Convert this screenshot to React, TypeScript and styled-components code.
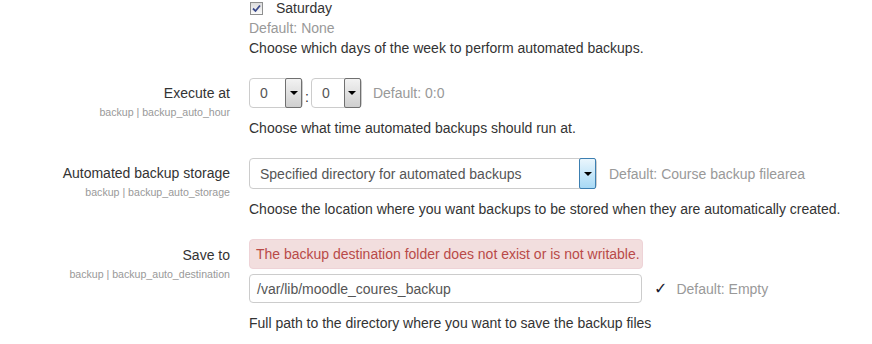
import React from 'react'
import styled, { createGlobalStyle } from 'styled-components'

const GlobalStyle = createGlobalStyle`
  body {
    margin: 0;
    background: #fff;
    font-family: "Liberation Sans", Arial, sans-serif;
    font-size: 14px;
    color: #333;
  }
`

const Page = styled.div`
  width: 872px;
  height: 344px;
  overflow: hidden;
`

const Setting = styled.div`
  display: grid;
  grid-template-columns: 230px 1fr;
  column-gap: 19px;
  margin-bottom: 20px;
`

const LabelCol = styled.div<{ $top?: number }>`
  text-align: right;
  padding-top: ${(p) => p.$top ?? 5}px;
`

const LabelText = styled.div`
  line-height: 20px;
  color: #333;
`

const SettingName = styled.div`
  font-size: 10.6px;
  line-height: 14px;
  color: #999;
  margin-top: 2px;
`

const Content = styled.div`
  display: flex;
  flex-direction: column;
`

const ControlRow = styled.div`
  display: flex;
  align-items: center;
`

const CheckRow = styled.label`
  display: flex;
  align-items: center;
  height: 16px;
  padding-left: 1px;
`

const CheckBox = styled.span`
  width: 11px;
  height: 11px;
  border: 1px solid #8e8f8f;
  background: linear-gradient(#dcdcdc, #fbfbfb);
  display: flex;
  align-items: center;
  justify-content: center;
  margin-right: 13px;
`

const DefaultText = styled.span<{ $gap?: number; $top?: number }>`
  color: #999;
  line-height: 20px;
  margin-left: ${(p) => p.$gap ?? 0}px;
  margin-top: ${(p) => p.$top ?? 0}px;
`

const Description = styled.div<{ $top?: number }>`
  line-height: 20px;
  margin-top: ${(p) => p.$top ?? 0}px;
`

const SelectBox = styled.div<{ $width: number; $height: number }>`
  width: ${(p) => p.$width}px;
  height: ${(p) => p.$height}px;
  box-sizing: border-box;
  border: 1px solid #ccc;
  border-radius: 4px;
  background: #fff;
  display: flex;
  align-items: stretch;
  color: #555;
`

const SelectValue = styled.span`
  flex: 1;
  display: flex;
  align-items: center;
  padding-left: 10px;
`

const SelectButton = styled.span<{ $active?: boolean }>`
  width: 15px;
  margin: -1px 0 -1px 0;
  border: 1px solid ${(p) => (p.$active ? '#3c7fb1' : '#707070')};
  background: ${(p) =>
    p.$active
      ? 'linear-gradient(#eaf6fd, #a7d9f5)'
      : 'linear-gradient(#f2f2f2, #cfcfcf)'};
  border-radius: 2px;
  display: flex;
  align-items: center;
  justify-content: center;
`

const Arrow = styled.span`
  width: 0;
  height: 0;
  border-left: 4px solid transparent;
  border-right: 4px solid transparent;
  border-top: 4px solid #000;
`

const Colon = styled.span`
  margin: 0 2px 0 2px;
  padding-top: 7px;
`

const ErrorBox = styled.div`
  width: 394px;
  height: 30px;
  box-sizing: border-box;
  background: #f2dede;
  border: 1px solid #eed3d7;
  border-radius: 4px;
  color: #b94a48;
  display: flex;
  align-items: center;
  padding-left: 6px;
`

const TextInput = styled.div`
  width: 393px;
  height: 29px;
  box-sizing: border-box;
  border: 1px solid #ccc;
  border-radius: 4px;
  color: #555;
  display: flex;
  align-items: center;
  padding-left: 7px;
  margin-top: 5px;
`

const Tick = styled.span`
  color: #1a1a2e;
  margin: 5px 0 0 12px;
  font-size: 16px;
  font-family: "DejaVu Sans", sans-serif;
  line-height: 20px;
`

const Select: React.FC<{
  value: string
  width: number
  height: number
  active?: boolean
}> = ({ value, width, height, active }) => (
  <SelectBox $width={width} $height={height}>
    <SelectValue>{value}</SelectValue>
    <SelectButton $active={active}>
      <Arrow />
    </SelectButton>
  </SelectBox>
)

export default function App() {
  return (
    <Page>
      <GlobalStyle />
      <Setting>
        <div />
        <Content>
          <CheckRow>
            <CheckBox>
              <svg width="9" height="9" viewBox="0 0 9 9">
                <path d="M1 4.5 L3.5 7 L8 1.5" stroke="#3b4a8c" strokeWidth="1.8" fill="none" />
              </svg>
            </CheckBox>
            Saturday
          </CheckRow>
          <DefaultText $top={2}>Default: None</DefaultText>
          <Description>Choose which days of the week to perform automated backups.</Description>
        </Content>
      </Setting>

      <Setting>
        <LabelCol>
          <LabelText>Execute at</LabelText>
          <SettingName>backup | backup_auto_hour</SettingName>
        </LabelCol>
        <Content>
          <ControlRow>
            <Select value="0" width={54} height={30} />
            <Colon>:</Colon>
            <Select value="0" width={51} height={30} />
            <DefaultText $gap={11}>Default: 0:0</DefaultText>
          </ControlRow>
          <Description $top={10}>Choose what time automated backups should run at.</Description>
        </Content>
      </Setting>

      <Setting>
        <LabelCol>
          <LabelText>Automated backup storage</LabelText>
          <SettingName>backup | backup_auto_storage</SettingName>
        </LabelCol>
        <Content>
          <ControlRow>
            <Select value="Specified directory for automated backups" width={348} height={31} active />
            <DefaultText $gap={12}>Default: Course backup filearea</DefaultText>
          </ControlRow>
          <Description $top={10}>
            Choose the location where you want backups to be stored when they are automatically created.
          </Description>
        </Content>
      </Setting>

      <Setting>
        <LabelCol $top={6}>
          <LabelText>Save to</LabelText>
          <SettingName>backup | backup_auto_destination</SettingName>
        </LabelCol>
        <Content>
          <ErrorBox>The backup destination folder does not exist or is not writable.</ErrorBox>
          <ControlRow>
            <TextInput>/var/lib/moodle_coures_backup</TextInput>
            <Tick>✓</Tick>
            <DefaultText $gap={9} $top={5}>Default: Empty</DefaultText>
          </ControlRow>
          <Description $top={10}>Full path to the directory where you want to save the backup files</Description>
        </Content>
      </Setting>
    </Page>
  )
}
